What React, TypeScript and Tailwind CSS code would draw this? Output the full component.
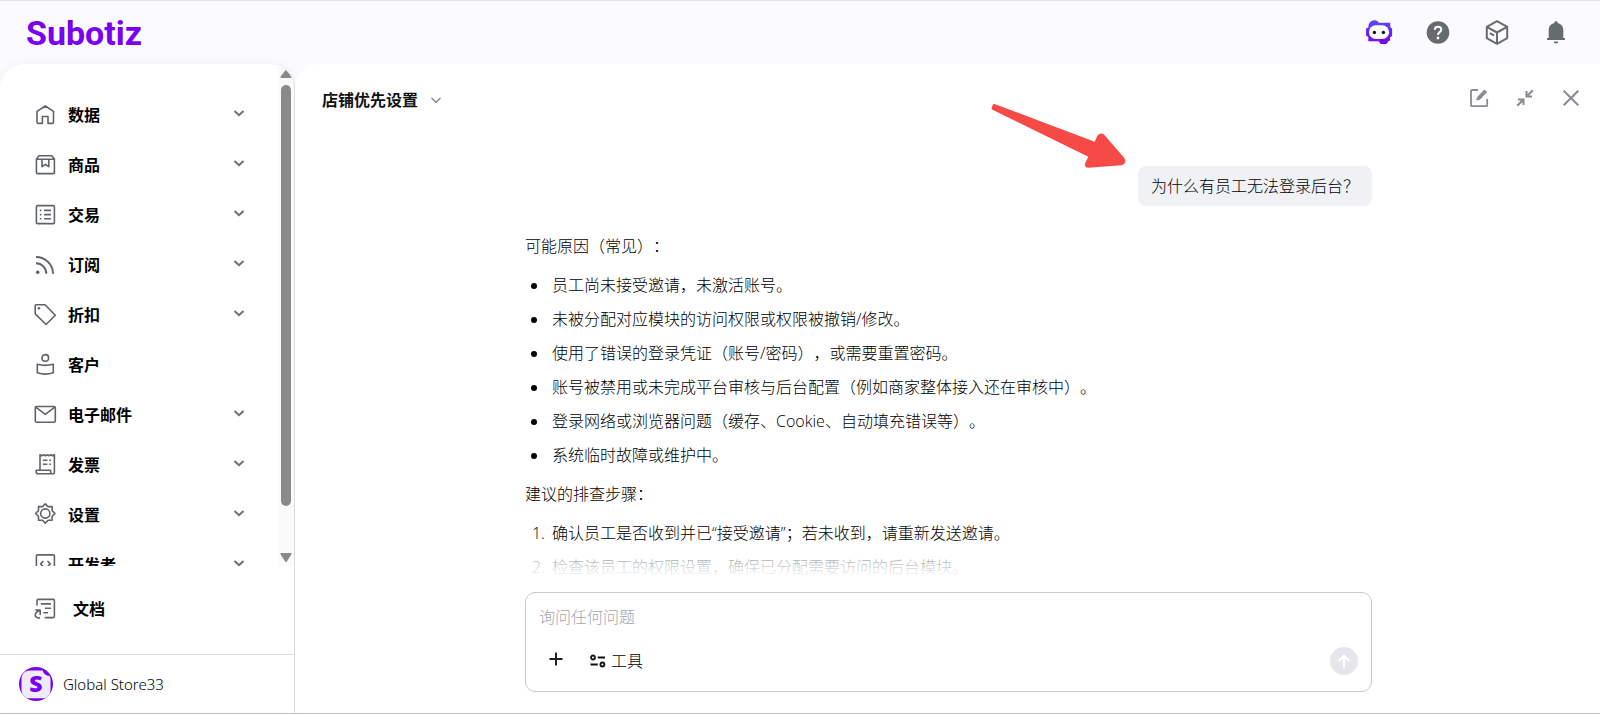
import { ReactNode, useState } from "react";

type MenuItem = {
  label: string;
  icon: ReactNode;
  expandable?: boolean;
};

const reasons = [
  "员工尚未接受邀请，未激活账号。",
  "未被分配对应模块的访问权限或权限被撤销/修改。",
  "使用了错误的登录凭证（账号/密码），或需要重置密码。",
  "账号被禁用或未完成平台审核与后台配置（例如商家整体接入还在审核中）。",
  "登录网络或浏览器问题（缓存、Cookie、自动填充错误等）。",
  "系统临时故障或维护中。",
];

const steps = [
  "确认员工是否收到并已“接受邀请”；若未收到，请重新发送邀请。",
  "检查该员工的权限设置，确保已分配需要访问的后台模块。",
];

const menu: MenuItem[] = [
  {
    label: "数据",
    expandable: true,
    icon: (
      <path d="M4 8.4 12.3 3l8.2 5.4V19a1.4 1.4 0 0 1-1.4 1.4H15v-6.9H9.4v6.9H5.4A1.4 1.4 0 0 1 4 19Z" />
    ),
  },
  {
    label: "商品",
    expandable: true,
    icon: (
      <>
        <path d="M3.4 6.2 6 2.7h12.8l2.6 3.5v13.2a1.2 1.2 0 0 1-1.2 1.2H4.6a1.2 1.2 0 0 1-1.2-1.2Z" />
        <path d="M3.4 6.3h18M9 6.3v7.4l3.4-2.3 3.4 2.3V6.3" />
      </>
    ),
  },
  {
    label: "交易",
    expandable: true,
    icon: (
      <>
        <rect x="3.4" y="2.6" width="18" height="18" rx="1.2" />
        <path d="M11 7.4h7M11 11.6h7M11 15.8h7M6.8 7.4h1.6M6.8 11.6h1.6M6.8 15.8h1.6" />
      </>
    ),
  },
  {
    label: "订阅",
    expandable: true,
    icon: (
      <>
        <path
          d="M3 4C12.4 4 20 11.4 20 20.8M3 10.3c5.8 0 10.3 4.6 10.3 10.5"
          strokeWidth="2"
        />
        <circle cx="4.7" cy="19.2" r="1.8" fill="currentColor" stroke="none" />
      </>
    ),
  },
  {
    label: "折扣",
    expandable: true,
    icon: (
      <>
        <path d="M2.2 2.5a.8.8 0 0 1 .8-.8h9l10.3 10.6-9.2 9.2L2.2 10.9Z" />
        <circle cx="6" cy="5.3" r="1.3" fill="currentColor" stroke="none" />
      </>
    ),
  },
  {
    label: "客户",
    icon: (
      <>
        <circle cx="12.3" cy="4.9" r="3.3" />
        <path d="M4.3 11.3c5 1.3 11 1.3 16 0v8.5c-5 1.6-11 1.6-16 0Z" />
      </>
    ),
  },
  {
    label: "电子邮件",
    expandable: true,
    icon: (
      <>
        <rect x="2.3" y="3.5" width="20" height="15.7" rx="1.3" />
        <path d="m2.8 4.2 9.5 7.2 9.5-7.2" />
      </>
    ),
  },
  {
    label: "发票",
    expandable: true,
    icon: (
      <>
        <path d="M7 17.3V1.7l1.8 1 1.8-1 1.9 1 1.8-1 1.8 1 1.8-1 1.8 1 1.7-1V19a1.8 1.8 0 0 1-1.8 1.8H5A1.8 1.8 0 0 1 3.2 19v-1.7h14.4V19a1.8 1.8 0 0 0 1.8 1.8" />
        <path d="M9.8 7.3h4.6M9.8 11.3h4.6M16.3 7.3h1.8M16.3 11.3h1.8" />
      </>
    ),
  },
  {
    label: "设置",
    expandable: true,
    icon: (
      <>
        <path d="m12.3.9 2.8 2.7h4v4l2.9 2.9-2.9 2.8v4h-4l-2.8 2.8-2.8-2.8h-4v-4l-2.9-2.8 2.9-2.9v-4h4Z" />
        <circle cx="12.3" cy="10.5" r="4.6" />
      </>
    ),
  },
  {
    label: "开发者",
    expandable: true,
    icon: (
      <>
        <rect x="3.4" y="1.9" width="18" height="18" rx="1.2" />
        <path d="m10.3 8-2.7 2.9 2.7 2.9M14.5 8l2.7 2.9-2.7 2.9" />
      </>
    ),
  },
];

function MenuIcon({ children }: { children: ReactNode }) {
  return (
    <svg
      viewBox="0 0 24 24"
      className="size-6 shrink-0 text-[#5f646b]"
      fill="none"
      stroke="currentColor"
      strokeWidth="1.6"
      strokeLinejoin="round"
      aria-hidden="true"
    >
      {children}
    </svg>
  );
}

function Chevron({ className }: { className: string }) {
  return (
    <svg
      viewBox="0 0 12 12"
      className={className}
      fill="none"
      stroke="currentColor"
      aria-hidden="true"
    >
      <path d="m1.5 4 4.5 4.2L10.5 4" />
    </svg>
  );
}

function Header() {
  return (
    <header className="flex h-16 shrink-0 items-center justify-between border-t border-[#e3e3e6] bg-[#fafaff] pr-[30px] pl-[26px]">
      <a
        href="#"
        className="font-[Roboto,sans-serif] text-[34px] leading-10 font-bold text-[#7a00f0]"
      >
        Subotiz
      </a>
      <div className="flex items-center gap-[31px] text-[#666b70]">
        <button type="button" aria-label="AI">
          <svg viewBox="0 0 28 28" className="size-7">
            <defs>
              <linearGradient id="bot" x1="0" y1="0" x2="0" y2="1">
                <stop offset="0" stopColor="#5a4dff" />
                <stop offset="1" stopColor="#7a00f0" />
              </linearGradient>
            </defs>
            <path
              fill="url(#bot)"
              d="M3.3 8.5C3.3 4 6 1.3 9.7 1.3c1.900 0 3.400.9 4.300 2.400h11.300v4.600l1.800 1.200v7.500l-2 1.200v3.400l-2.100.9V23l-1.700 2h-5.600L13.700 22.300H3.300v-4.300L1 16.500v-7l2.300-1Z"
            />
            <rect x="4" y="6.3" width="20" height="13.7" rx="6.8" fill="#fff" />
            <circle cx="9.4" cy="13.4" r="1.7" fill="#111" />
            <circle cx="18.4" cy="13.4" r="1.7" fill="#111" />
          </svg>
        </button>
        <button type="button" aria-label="帮助">
          <svg viewBox="0 0 28 28" className="size-7" fill="none">
            <circle cx="14" cy="13.5" r="11.3" fill="currentColor" />
            <path
              d="M10.8 10.7c0-1.800 1.300-3 3.200-3s3.300 1.100 3.300 2.800c0 2.700-3.300 2.600-3.300 5.400"
              stroke="#fff"
              strokeWidth="2"
            />
            <circle cx="14" cy="19" r="1.4" fill="#fff" />
          </svg>
        </button>
        <button type="button" aria-label="应用">
          <svg
            viewBox="0 0 28 28"
            className="size-7"
            fill="none"
            stroke="currentColor"
            strokeWidth="2"
            strokeLinejoin="round"
          >
            <path d="m14 2.2 10.200 5.700v11.200L14 24.800 3.800 19.100V7.900Z" />
            <path d="M3.800 7.900 14 13.500l10.200-5.600M14 13.500v11.300M6.700 14.200l4.300 2.200" />
          </svg>
        </button>
        <button type="button" aria-label="通知">
          <svg viewBox="0 0 28 28" className="size-7" fill="currentColor">
            <path d="M14 2.2c1 0 1.700.7 1.700 1.700 3.500.8 5.600 3.500 5.600 7.200V19H23v2H5v-2h1.700v-7.900c0-3.700 2.100-6.400 5.600-7.200 0-1 .7-1.700 1.700-1.700Z" />
            <path d="M11.7 22.5h4.600a2.300 2 0 0 1-4.600 0Z" />
          </svg>
        </button>
      </div>
    </header>
  );
}

function Sidebar() {
  return (
    <aside className="flex w-[295px] shrink-0 flex-col rounded-t-3xl border-r border-[#dcdce0] bg-white shadow-[0_0_10px_rgba(60,60,110,0.06)]">
      <div className="flex min-h-0 flex-1 overflow-hidden rounded-t-3xl">
        <nav className="min-w-0 flex-1 pt-[26px]">
          <ul>
            {menu.map((item) => (
              <li key={item.label}>
                <button
                  type="button"
                  className="flex h-[50px] w-full items-center gap-[11px] px-[33px] text-left text-base font-bold text-black"
                >
                  <MenuIcon>{item.icon}</MenuIcon>
                  <span className="flex-1">{item.label}</span>
                  {item.expandable && (
                    <Chevron className="mb-1 size-3 stroke-2 text-[#6b7077]" />
                  )}
                </button>
              </li>
            ))}
          </ul>
        </nav>
        <div
          className="flex w-4 flex-col items-center bg-[#fafafa] pt-1.5 pb-1"
          aria-hidden="true"
        >
          <svg viewBox="0 0 12 8" className="h-2 w-3 fill-[#8a8a8a]">
            <path d="M5.2.6a1 1 0 0 1 1.6 0l4.600 6a.9.9 0 0 1-.7 1.400H1.300a.9.9 0 0 1-.7-1.400Z" />
          </svg>
          <div className="mt-[7px] w-2.5 flex-1 rounded-full bg-[#8a8a8a]" />
          <svg viewBox="0 0 12 9" className="mt-[47px] h-[9px] w-3 fill-[#8a8a8a]">
            <path d="M6.8 8.4a1 1 0 0 1-1.6 0L.6 1.400A.9.9 0 0 1 1.300 0h9.400a.9.9 0 0 1 .7 1.400Z" />
          </svg>
        </div>
      </div>
      <a
        href="#"
        className="mt-[18px] mb-5 flex h-[50px] items-center gap-4 pl-[33px] text-base font-bold text-black"
      >
        <MenuIcon>
          <path d="M4 8.5V3.7a1.300 1.300 0 0 1 1.300-1.300h14.800a1.300 1.300 0 0 1 1.300 1.300v15.600a1.300 1.300 0 0 1-1.300 1.300h-8.400" />
          <path d="M7.8 6.9H18M12 11.300h6M10.300 15.800H15M2.200 13h5v5M7 13.200c-3.300 1.200-5 3.200-4.700 5.300.3 1.900 2 2.700 4.700 2.400" />
        </MenuIcon>
        文档
      </a>
      <div className="flex h-[59px] shrink-0 items-center gap-2.5 border-t border-[#dcdce0] pl-[19px]">
        <svg viewBox="0 0 34 34" className="size-[34px]" aria-hidden="true">
          <circle cx="17" cy="17" r="17" fill="#7a00f0" />
          <path
            fill="#eeebfb"
            d="M10.500 3.500h13.200c.9 3.200 2.700 4.900 7 5.600.6 1.200.8 2.200.8 3.600v10c0 4.700-3.300 8.600-8 8.600H10.500c-4.700 0-8-3.900-8-8.600v-10.500c0-4.700 3.300-8.700 8-8.700Z"
          />
          <text
            x="17"
            y="25"
            textAnchor="middle"
            fill="#7a00f0"
            fontFamily="Open Sans"
            fontWeight="800"
            fontSize="23"
          >
            S
          </text>
        </svg>
        <span className="font-['Noto_Sans',sans-serif] text-[15px] font-light text-black">
          Global Store33
        </span>
      </div>
    </aside>
  );
}

function ChatHeader() {
  return (
    <div className="flex h-[72px] shrink-0 items-center justify-between pr-[19px] pl-[25px]">
      <button
        type="button"
        className="flex items-center gap-3 text-base font-bold text-[#111]"
      >
        店铺优先设置
        <Chevron className="size-3 stroke-[1.4] text-[#7d858e]" />
      </button>
      <div className="mb-1 flex items-center gap-[26px] text-[#868c92]">
        <button type="button" aria-label="新对话">
          <svg
            viewBox="0 0 20 20"
            className="size-5"
            fill="none"
            stroke="currentColor"
            strokeWidth="1.8"
          >
            <path d="M9 2H3a1 1 0 0 0-1 1v14.200a1 1 0 0 0 1 1h14.200a1 1 0 0 0 1-1V11" />
            <path d="m7.800 12 .8-2.800L15.400 2l2.300 2-7 7.300Z" fill="currentColor" strokeWidth="1" />
          </svg>
        </button>
        <button type="button" aria-label="缩小">
          <svg
            viewBox="0 0 20 20"
            className="size-5"
            fill="none"
            stroke="currentColor"
            strokeWidth="2"
          >
            <path d="m17.800 2.200-6 6M11.500 3v5.500H17M2.200 17.800l6-6M3 11.500h5.500V17" />
          </svg>
        </button>
        <button type="button" aria-label="关闭">
          <svg
            viewBox="0 0 20 20"
            className="size-5"
            fill="none"
            stroke="currentColor"
            strokeWidth="2"
          >
            <path d="m2.700 2.700 14.600 14.600M17.300 2.700 2.700 17.300" />
          </svg>
        </button>
      </div>
    </div>
  );
}

function Composer() {
  const [text, setText] = useState("");

  return (
    <form
      onSubmit={(e) => e.preventDefault()}
      className="mx-auto mt-3.5 mb-[21px] w-[65%] shrink-0 rounded-[10px] border border-[#c8c9cc] px-[13px] pt-3 pb-4"
    >
      <textarea
        rows={1}
        aria-label="询问任何问题"
        placeholder="询问任何问题"
        value={text}
        onChange={(e) => setText(e.target.value)}
        className="block h-6 w-full resize-none text-base leading-6 font-light outline-none placeholder:text-[#a3a7ae]"
      />
      <div className="mt-[18px] flex h-7 items-center">
        <button
          type="button"
          aria-label="添加"
          className="flex h-7 w-[34px] items-center justify-center pb-1"
        >
          <svg viewBox="0 0 14 14" className="size-3.5 stroke-[#222] stroke-2">
            <path d="M7 .5v13M.5 7h13" />
          </svg>
        </button>
        <button
          type="button"
          className="ml-4 flex items-center gap-1 text-base leading-6 font-light text-black"
        >
          <svg
            viewBox="0 0 18 18"
            className="size-[18px]"
            fill="none"
            stroke="#111"
            strokeWidth="1.8"
          >
            <circle cx="4" cy="5.5" r="2" />
            <circle cx="13.400" cy="12.500" r="2" />
            <path d="M8.700 5.500H16M1.500 12.500h7.300" />
          </svg>
          工具
        </button>
        <button
          type="submit"
          aria-label="发送"
          className="ml-auto flex size-7 items-center justify-center rounded-full bg-[#e6e7ec]"
        >
          <svg
            viewBox="0 0 14 14"
            className="size-3.5"
            fill="none"
            stroke="#fff"
            strokeWidth="2"
            strokeLinecap="round"
            strokeLinejoin="round"
          >
            <path d="M7 12.500V1.700M2.500 6.200 7 1.500l4.500 4.700" />
          </svg>
        </button>
      </div>
    </form>
  );
}

function Chat() {
  return (
    <main className="flex min-w-0 flex-1 flex-col overflow-hidden rounded-tl-3xl bg-white pl-0.5">
      <ChatHeader />
      <div className="relative min-h-0 flex-1">
        <div className="mx-auto w-[65%] pt-[30px] text-base font-light text-black">
          <div className="flex justify-end">
            <div className="relative rounded-lg bg-[#f0f1f4] px-[13px] py-2 leading-6">
              为什么有员工无法登录后台？
              <svg
                viewBox="0 0 136 66"
                className="absolute -top-16 right-full mr-3 h-[66px] w-[136px] fill-[#f54a45]"
                aria-hidden="true"
              >
                <path d="M2.500 3.500Q3.200 1.600 5 2.200L104.700 39.700 107 34.500Q109.500 29.500 114 32.500L134.300 56Q137.500 61 131.500 63.300L98.500 65.700Q94 65 95.300 61L98.300 54.700 3 8Q1 7.200 1.600 6Z" />
              </svg>
            </div>
          </div>
          <div className="mt-[23px] flex flex-col gap-[5px] leading-[34px]">
            <p>可能原因（常见）：</p>
            <ul className="list-disc pl-6">
              {reasons.map((r) => (
                <li key={r} className="pl-[3px]">
                  {r}
                </li>
              ))}
            </ul>
            <p>建议的排查步骤：</p>
            <ol className="list-decimal pl-6">
              {steps.map((s) => (
                <li key={s} className="pl-[3px]">
                  {s}
                </li>
              ))}
            </ol>
          </div>
        </div>
        <div className="pointer-events-none absolute inset-x-0 bottom-0 h-7 bg-linear-to-b from-white/50 to-white" />
      </div>
      <Composer />
    </main>
  );
}

export default function App() {
  return (
    <div
      lang="zh-CN"
      className="flex h-screen flex-col border-b border-[#b9bcc2] bg-[#fafaff] font-['Open_Sans','Noto_Sans_CJK_SC',sans-serif] [text-spacing-trim:space-all]"
    >
      <Header />
      <div className="flex min-h-0 flex-1">
        <Sidebar />
        <Chat />
      </div>
    </div>
  );
}
